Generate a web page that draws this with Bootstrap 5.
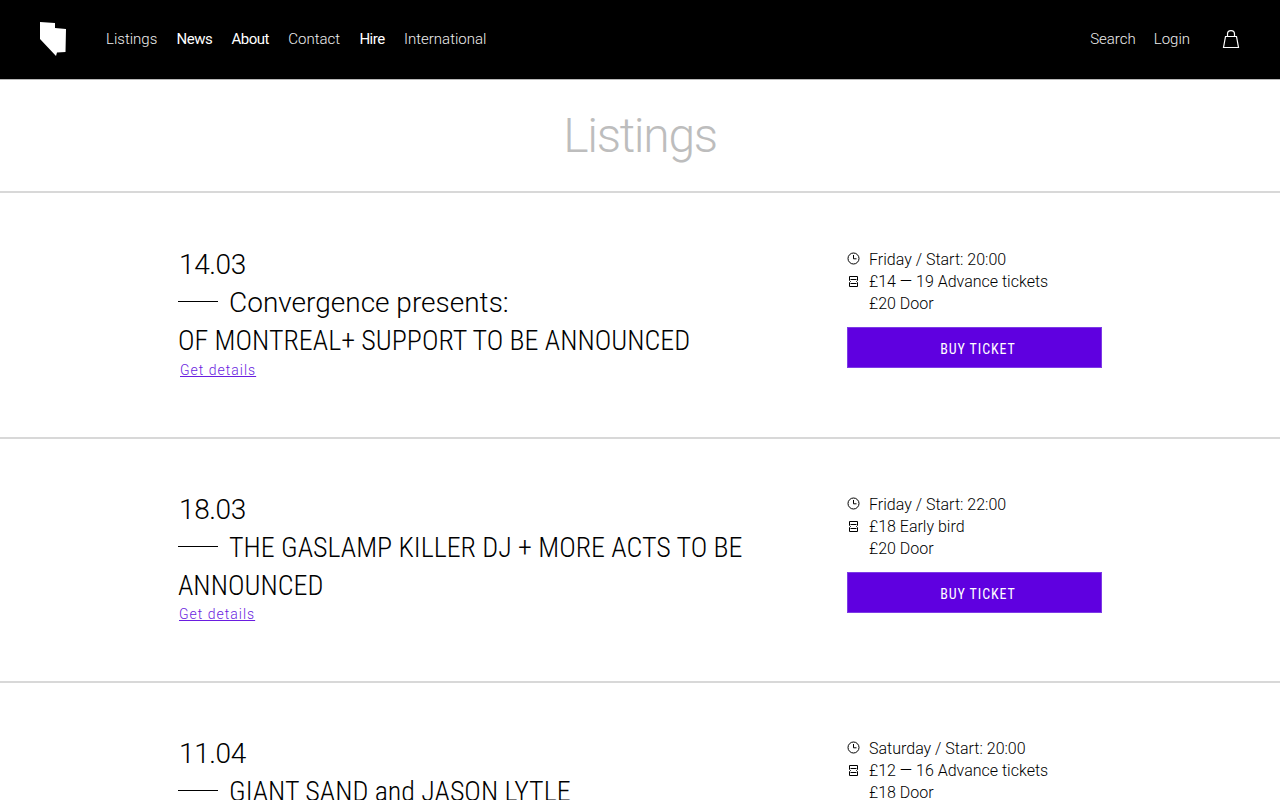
<!DOCTYPE html>
<html lang="en"><head><meta charset="utf-8"><title>Listings</title>
<link href="https://cdn.jsdelivr.net/npm/bootstrap@5.3.0/dist/css/bootstrap.min.css" rel="stylesheet">
<style>
html,body{height:800px;overflow:hidden}
body{font-family:Roboto,"Liberation Sans",sans-serif;font-weight:300;color:#000;background:#fff}
.topbar{height:80px;background:#000;border-bottom:1px solid #b8b8b8;padding:0 40px 2px 40px}
.logo-mark{width:26px;height:34px;display:block}
.menu-links{gap:19.3px;margin-left:40px;padding-top:1px}
.side-links{padding-top:1px;gap:18px}
.menu-links a,.side-links a{color:#eee;text-decoration:none;font-size:15px;font-weight:300}
.menu-links a.hot{color:#fff;font-weight:400;letter-spacing:-.5px}
.bag-mark{width:18px;height:20px;display:block;margin-left:14px;margin-top:-1px}
.page-head{height:113px;border-bottom:2px solid #d8d8d8;color:#bdbdbd;font-size:48px;font-weight:300;letter-spacing:-1.3px}
.show-row{border-bottom:2px solid #d8d8d8;padding-left:178px;padding-right:178px}
.row-one{height:246px;padding-top:53px}
.row-two{height:244px;padding-top:52px}
.row-three{height:117px;padding-top:52px;border-bottom:0}
.show-main{width:669px}
.show-date{font-size:28px;line-height:38px;margin:0;letter-spacing:-.4px;padding-left:1px}
.show-title{font-size:28px;line-height:38px;margin:0;font-weight:300}
.caps-name{font-family:"Roboto Condensed",Roboto,sans-serif;font-weight:300}
.dash{display:inline-block;width:40px;height:1px;background:#000;vertical-align:10px;margin-right:11px}
.details-link{color:#6a1de0;font-size:14px;letter-spacing:1px;line-height:20px;display:block;padding-left:1px;width:max-content;margin-top:-1px}
.link-first{margin-top:0;padding-left:2px}
.show-side{width:255px;font-size:16px;line-height:22px;margin-top:3px}
.info-line{display:flex;align-items:center;gap:9px}
.info-line svg{width:13px;height:13px;flex:none;margin-top:-2px}
.info-line svg.clock-mark{margin-top:-4px}
.info-line .spacer{width:13px;flex:none}
.buy-btn{display:block;width:255px;height:41px;line-height:42px;padding:0 0 0 7px;margin-top:12px;background:#5f00e0;color:#fff;border:1px solid #7d3be6;border-radius:0;font-size:14px;letter-spacing:.9px;font-weight:400;font-family:"Roboto Condensed",Roboto,sans-serif}
.buy-btn:hover{background:#5f00e0;color:#fff}
</style></head><body>
<nav class="topbar d-flex align-items-center">
<a href="#"><svg class="logo-mark" viewBox="0 0 26 34"><path d="M0 0 15 1V6L26 7 25.500 30 17 30.500 16 34 0 17Z" fill="#fff"/></svg></a>
<div class="menu-links d-flex"><a href="#">Listings</a><a href="#" class="hot">News</a><a href="#" class="hot">About</a><a href="#">Contact</a><a href="#" class="hot">Hire</a><a href="#">International</a></div>
<div class="side-links d-flex align-items-center ms-auto"><a href="#">Search</a><a href="#">Login</a><a href="#"><svg class="bag-mark" viewBox="0 0 18 20" fill="none" stroke="#fff" stroke-width="1.200"><path d="M1.500 18.500 3.500 7.500H14.500L16.500 18.500Z"/><path d="M5.500 7.500V5C5.500 .5 12.500 .5 12.500 5V7.500"/></svg></a></div>
</nav>
<header class="page-head d-flex align-items-center justify-content-center">Listings</header>
<main>
<section class="show-row row-one d-flex">
<div class="show-main"><p class="show-date">14.03</p><h2 class="show-title"><span class="dash"></span>Convergence presents:<br><span class="caps-name">OF MONTREAL+ SUPPORT TO BE ANNOUNCED</span></h2><a class="details-link link-first" href="#">Get details</a></div>
<div class="show-side"><div class="info-line"><svg class="clock-mark" viewBox="0 0 13 13" fill="none" stroke="#000"><circle cx="6.500" cy="6.500" r="5.500"/><path d="M6.500 3V6.800H9.500"/></svg>Friday / Start: 20:00</div><div class="info-line"><svg viewBox="0 0 13 13" fill="none" stroke="#000"><path d="M2.500 1.500H10.500V5.500L9.500 6.500 10.500 7.500V11.500H2.500V7.500L3.500 6.500 2.500 5.500ZM3.500 4.500H9.500M3.500 8.500H9.500"/></svg>£14 — 19 Advance tickets</div><div class="info-line"><span class="spacer"></span>£20 Door</div><a href="#" class="btn buy-btn">BUY TICKET</a></div>
</section>
<section class="show-row row-two d-flex">
<div class="show-main"><p class="show-date">18.03</p><h2 class="show-title"><span class="dash"></span><span class="caps-name">THE GASLAMP KILLER DJ + MORE ACTS TO BE ANNOUNCED</span></h2><a class="details-link" href="#">Get details</a></div>
<div class="show-side"><div class="info-line"><svg class="clock-mark" viewBox="0 0 13 13" fill="none" stroke="#000"><circle cx="6.500" cy="6.500" r="5.500"/><path d="M6.500 3V6.800H9.500"/></svg>Friday / Start: 22:00</div><div class="info-line"><svg viewBox="0 0 13 13" fill="none" stroke="#000"><path d="M2.500 1.500H10.500V5.500L9.500 6.500 10.500 7.500V11.500H2.500V7.500L3.500 6.500 2.500 5.500ZM3.500 4.500H9.500M3.500 8.500H9.500"/></svg>£18 Early bird</div><div class="info-line"><span class="spacer"></span>£20 Door</div><a href="#" class="btn buy-btn">BUY TICKET</a></div>
</section>
<section class="show-row row-three d-flex">
<div class="show-main"><p class="show-date">11.04</p><h2 class="show-title"><span class="dash"></span><span class="caps-name">GIANT SAND and JASON LYTLE</span></h2></div>
<div class="show-side"><div class="info-line"><svg class="clock-mark" viewBox="0 0 13 13" fill="none" stroke="#000"><circle cx="6.500" cy="6.500" r="5.500"/><path d="M6.500 3V6.800H9.500"/></svg>Saturday / Start: 20:00</div><div class="info-line"><svg viewBox="0 0 13 13" fill="none" stroke="#000"><path d="M2.500 1.500H10.500V5.500L9.500 6.500 10.500 7.500V11.500H2.500V7.500L3.500 6.500 2.500 5.500ZM3.500 4.500H9.500M3.500 8.500H9.500"/></svg>£12 — 16 Advance tickets</div><div class="info-line"><span class="spacer"></span>£18 Door</div></div>
</section>
</main>
</body></html>
